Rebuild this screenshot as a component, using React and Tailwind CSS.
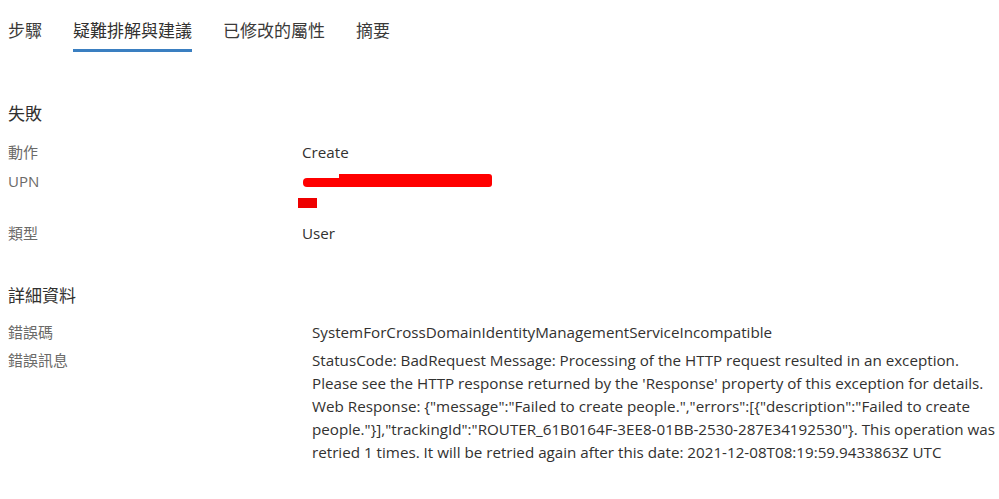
import React from "react";

const cjk = "font-['Open_Sans','Noto_Sans_CJK_TC',sans-serif]";

export default function App() {
  const tabs = ["步驟", "疑難排解與建議", "已修改的屬性", "摘要"];
  const msg = [
    "StatusCode: BadRequest Message: Processing of the HTTP request resulted in an exception.",
    "Please see the HTTP response returned by the 'Response' property of this exception for details.",
    'Web Response: {"message":"Failed to create people.","errors":[{"description":"Failed to create',
    'people."}],"trackingId":"ROUTER_61B0164F-3EE8-01BB-2530-287E34192530"}. This operation was',
    "retried 1 times. It will be retried again after this date: 2021-12-08T08:19:59.9433863Z UTC",
  ];
  const label = "shrink-0 text-[15px] leading-[23px] text-[#6b6a68]";
  const value = "text-[15.2px] leading-[23px] text-[#323130]";
  return (
    <div className={`w-[999px] h-[499px] bg-white overflow-hidden ${cjk} text-[#323130]`}>
      {/* Tabs */}
      <div className="flex gap-[31px] pl-[8px] pt-[19px]">
        {tabs.map((t, i) => (
          <div
            key={t}
            className={`text-[17px] leading-[24px] pb-[6px] border-b-[3px] ${
              i === 1 ? "border-[#3a7fc1] text-[#323130]" : "border-transparent text-[#3b3a39]"
            }`}
          >
            {t}
          </div>
        ))}
      </div>

      {/* Section: 失敗 */}
      <div className="pl-[8px] mt-[50px] text-[17px] leading-[24px] text-[#323130]">失敗</div>
      <div className="pl-[8px] mt-[15px] flex flex-col gap-[6px]">
        <div className="flex">
          <div className={`w-[294px] ${label}`}>動作</div>
          <div className={value}>Create</div>
        </div>
        <div className="flex">
          <div className={`w-[294px] ${label}`}>UPN</div>
          <div className="flex flex-col h-[46px]">
            <div className="flex items-end mt-[4px] ml-[1px]">
              <div className="w-[36px] h-[9px] bg-[#ff0000] rounded-l-[4px]" />
              <div className="w-[153px] h-[13px] bg-[#ff0000] rounded-r-[3px]" />
            </div>
            <div className="mt-[11px] ml-[-4px] w-[19px] h-[10px] bg-[#ee0000]" />
          </div>
        </div>
        <div className="flex">
          <div className={`w-[294px] ${label}`}>類型</div>
          <div className={value}>User</div>
        </div>
      </div>

      {/* Section: 詳細資料 */}
      <div className="pl-[8px] mt-[39px] text-[17px] leading-[24px] text-[#323130]">詳細資料</div>
      <div className="pl-[8px] mt-[13px] flex flex-col gap-[5px]">
        <div className="flex">
          <div className={`w-[304px] ${label}`}>錯誤碼</div>
          <div className={value}>SystemForCrossDomainIdentityManagementServiceIncompatible</div>
        </div>
        <div className="flex">
          <div className={`w-[304px] ${label}`}>錯誤訊息</div>
          <div className={`${value} whitespace-nowrap`}>
            {msg.map((l) => (
              <div key={l}>{l}</div>
            ))}
          </div>
        </div>
      </div>
    </div>
  );
}
